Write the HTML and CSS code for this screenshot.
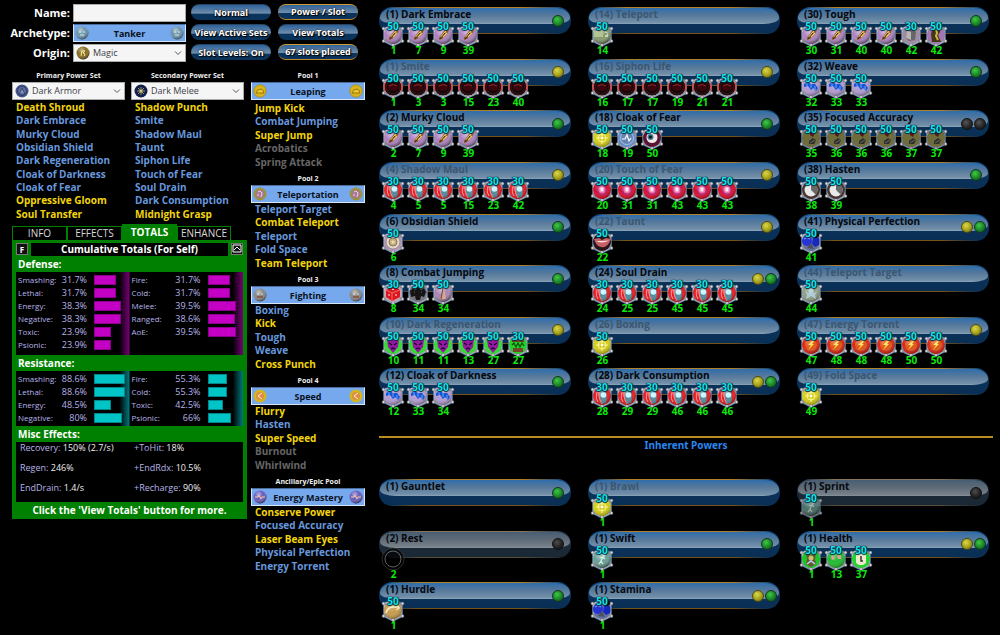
FILE: index.html
```html
<!DOCTYPE html>
<html lang="en">
<head>
<meta charset="utf-8">
<title>Hero Designer</title>
<link rel="stylesheet" href="styles.css">
</head>
<body>
<svg class="defs" aria-hidden="true">
<defs>
<radialGradient id="shade" cx=".4" cy=".3" r=".7"><stop offset="0" stop-color="#fff" stop-opacity=".5"/><stop offset=".5" stop-color="#fff" stop-opacity="0"/><stop offset="1" stop-color="#000" stop-opacity=".5"/></radialGradient>
<linearGradient id="silver" x2="1" y2="1"><stop offset="0" stop-color="#d4d4da"/><stop offset=".5" stop-color="#95979e"/><stop offset="1" stop-color="#b3b5bc"/></linearGradient>
<symbol id="frame" viewBox="0 0 24 24"><path d="M12 1 21 5.500V18.500L12 23 3 18.500V5.500Z" fill="#1f4f7e" stroke="#2f6ca5" stroke-width="1.500"/><path d="M12 1.500 20.500 6V18L12 22.500 3.500 18V6Z" fill="#847f89" stroke="url(#silver)" stroke-width="1.500"/><g fill="#d4d4da" stroke="#55575c" stroke-width=".5"><circle cx="2.500" cy="5.500" r="1.500"/><circle cx="21.500" cy="5.500" r="1.500"/><circle cx="2.500" cy="18" r="1.500"/><circle cx="21.500" cy="18" r="1.500"/><circle cx="12" cy="22" r="1.500"/></g></symbol>
<symbol id="resist" viewBox="0 0 24 24"><circle cx="12" cy="12" r="9" fill="#ad7fc0"/><circle cx="12" cy="12" r="9" fill="url(#shade)"/><path d="M8 15 13 8 18 7 16 11 11 16 8 17Z" fill="#8b5c22"/><path d="M10 14 15 8M12 14 16 10" stroke="#f0cc68" stroke-width="1.200"/><path d="M9 16 14 10" stroke="#3b2417"/></symbol>
<symbol id="smite" viewBox="0 0 24 24"><circle cx="12" cy="12" r="9" fill="#120708" stroke="#a89a9e" stroke-width="1"/><path d="M4 8A9 9 0 0 0 4 16M20 8A9 9 0 0 1 20 16" stroke="#e04444" stroke-width="1.500" fill="none"/><circle cx="12" cy="12" r="7" fill="none" stroke="#2b1116" stroke-width="2"/><ellipse cx="12" cy="12" rx="5.500" ry="4" fill="#3a060b"/><path d="M8 11Q12 8 16 11" stroke="#8a2a32" fill="none"/></symbol>
<symbol id="maul" viewBox="0 0 24 24"><circle cx="12" cy="12" r="9" fill="#e81a20"/><path d="M11 4Q8 12 12 20L16 19Q18 12 15 5Z" fill="#4f8c9e"/><path d="M10 4Q7 12 12 20M9 5Q4 12 8 18" stroke="#f5b4b6" stroke-width=".8" fill="none"/><circle cx="13.500" cy="11" r="2.800" fill="#c6f5ff"/><circle cx="12" cy="12" r="9" fill="url(#shade)" opacity=".6"/></symbol>
<symbol id="shield" viewBox="0 0 24 24"><circle cx="12" cy="12" r="9" fill="#b695bf"/><circle cx="12" cy="12" r="7" fill="#e2d7c9" stroke="#8c8276" stroke-width=".8"/><circle cx="12" cy="12" r="4" fill="#c5af87" stroke="#77664a" stroke-width=".8"/><circle cx="12" cy="12" r="1.500" fill="#f7dda0"/></symbol>
<symbol id="dice" viewBox="0 0 24 24"><circle cx="12" cy="12" r="9" fill="#c7a5b3"/><path d="M5 9 14 5 19 9V16L11 20 5 16Z" fill="#db181f"/><path d="M5 9 11 12 19 9M11 12V20" stroke="#ff8c86" stroke-width=".7" fill="none"/><g fill="#fff"><circle cx="8" cy="14" r=".8"/><circle cx="15" cy="14" r=".8"/><circle cx="12" cy="8.500" r=".8"/></g></symbol>
<symbol id="knights" viewBox="0 0 24 24"><circle cx="12" cy="12" r="9" fill="#777680"/><path d="M4 10 7 7 9 9 12 5 15 9 18 7 20 11 18 16 15 15 14 19 10 19 9 15 5 16Z" fill="#151515"/><path d="M8 11H9M15 11H16" stroke="#666"/></symbol>
<symbol id="nose" viewBox="0 0 24 24"><circle cx="12" cy="12" r="9" fill="#a883b1"/><circle cx="12" cy="12" r="9" fill="url(#shade)"/><path d="M12 6 14 12 15 18 9 18 11 12Z" fill="#d5a88d"/><path d="M12 7 10 18" stroke="#684542"/></symbol>
<symbol id="mask" viewBox="0 0 24 24"><circle cx="12" cy="12" r="9" fill="#35da32"/><path d="M6 6 9 7 12 6 15 7 18 6 17 14 12 20 7 14Z" fill="#9518a3"/><path d="M8 10 11 12M16 10 13 12M10 16 12 15 14 16" stroke="#1b0324" stroke-width="1.300" fill="none"/></symbol>
<symbol id="totem" viewBox="0 0 24 24"><circle cx="12" cy="12" r="9" fill="#25d028"/><path d="M6 6H18V9H6ZM7 15H17V19H7Z" fill="#774329"/><path d="M6 12 8 10 10 14 12 10 14 14 16 10 18 13" stroke="#084f09" stroke-width="1.200" fill="none"/></symbol>
<symbol id="weave" viewBox="0 0 24 24"><circle cx="12" cy="12" r="9" fill="#b29bd2"/><circle cx="12" cy="12" r="9" fill="url(#shade)" opacity=".7"/><path d="M5 9 9 7 12 9 16 9 19 13 17 16 14 13 12 15 9 11 5 12Z" fill="#1555d8"/><path d="M8 8V11M12 9V13M16 11V15" stroke="#86bcf8" stroke-width=".8"/></symbol>
<symbol id="olive" viewBox="0 0 24 24"><circle cx="12" cy="12" r="9" fill="#83996a"/><circle cx="12" cy="12" r="9" fill="url(#shade)"/><path d="M4 8H13V14H4Z" fill="#b4c394"/><path d="M15 8V14H18Q19 9 15 8Z" fill="#cbd6b3"/><path d="M16 10V12" stroke="#40523a"/></symbol>
<symbol id="target" viewBox="0 0 24 24"><circle cx="12" cy="12" r="9" fill="#d6ce18"/><circle cx="12" cy="12" r="9" fill="url(#shade)" opacity=".6"/><circle cx="12" cy="12" r="4" fill="none" stroke="#fff9a2" stroke-width=".8"/><path d="M12 6V10M12 14V18M6 12H10M14 12H18" stroke="#fffbc7" stroke-width=".8"/><circle cx="12" cy="12" r="1.300" fill="#fff"/></symbol>
<symbol id="pulse" viewBox="0 0 24 24"><circle cx="12" cy="12" r="9" fill="#658fca"/><circle cx="12" cy="12" r="6.500" fill="#6684b3" stroke="#b8cfee" stroke-width=".8"/><path d="M7 13H10L12 9 14 15 16 12" stroke="#fff" stroke-width="1.200" fill="none"/></symbol>
<symbol id="eye" viewBox="0 0 24 24"><circle cx="12" cy="12" r="9" fill="#5a1535"/><circle cx="12" cy="11.500" r="5.500" fill="#f1e9e4"/><circle cx="10.500" cy="11" r="3" fill="#3e7894"/><circle cx="10.500" cy="11" r="1.500" fill="#080f14"/></symbol>
<symbol id="fear" viewBox="0 0 24 24"><circle cx="12" cy="12" r="9" fill="#e10b29"/><circle cx="12" cy="12" r="5.500" fill="#b81d68"/><circle cx="12" cy="12" r="3.500" fill="#ea6da4"/><rect x="10.500" y="9.500" width="3" height="4" fill="#ffe5f1"/><circle cx="12" cy="12" r="9" fill="url(#shade)" opacity=".6"/></symbol>
<symbol id="lips" viewBox="0 0 24 24"><circle cx="12" cy="12" r="9" fill="#291519"/><path d="M4 9 9 8 12 10 16 8 21 9Q17 19 11 17 6 16 4 9Z" fill="#c76065"/><path d="M6 11Q12 11 19 10.500Q12 14 6 11" fill="#f6e9de"/></symbol>
<symbol id="block" viewBox="0 0 24 24"><circle cx="12" cy="12" r="9" fill="#9f8ba6"/><path d="M8 7 13 6 17 9 16 17 10 18 7 15Z" fill="#666"/><path d="M8 7 12 9V17L7 15Z" fill="#b9b5b3"/></symbol>
<symbol id="idol" viewBox="0 0 24 24"><circle cx="12" cy="12" r="9" fill="#a277b1"/><path d="M9 4H15L16 9 14 12 17 19H8L7 11Z" fill="#453615"/><path d="M12 6 13 10 12 13 14 17" stroke="#cdb548" stroke-width="2" fill="none"/></symbol>
<symbol id="focus" viewBox="0 0 24 24"><circle cx="12" cy="12" r="9" fill="#8e8b4c"/><path d="M11 5 16 6 14 11 11 9Z" fill="#701d25"/><path d="M10 15 14 12 17 14 15 18 10 18Z" fill="#3b3c3d"/><path d="M11 17 16 14" stroke="#88877b"/><path d="M12 1 21 5.500V18.500L12 23 3 18.500V5.500Z" fill="#000" opacity=".22"/></symbol>
<symbol id="clock" viewBox="0 0 24 24"><circle cx="12" cy="12" r="9" fill="#473531"/><circle cx="12" cy="12" r="6.500" fill="#e9e9e9"/><path d="M12 12V5.500A6.500 6.500 0 0 1 16.600 16.600Z" fill="#6a6967"/></symbol>
<symbol id="stamina" viewBox="0 0 24 24"><circle cx="12" cy="12" r="9" fill="#6370a0"/><circle cx="8" cy="11" r="5" fill="#2634d6"/><path d="M14 8H20V15L16 17 13 14Z" fill="#1629bf"/><circle cx="17" cy="5" r="3" fill="#06070d"/><path d="M8 18 12 13 15 19Z" fill="#4d5059"/><path d="M5 9Q8 6 11 9" stroke="#8ca0ff" fill="none"/></symbol>
<symbol id="crystal" viewBox="0 0 24 24"><circle cx="12" cy="12" r="9" fill="#8f9f83"/><circle cx="12" cy="12" r="9" fill="url(#shade)" opacity=".6"/><circle cx="12" cy="10" r="2.500" fill="#bcd6de"/><path d="M6 10 9 12 12 11 15 12 18 10 16 14 17 18 12 15 7 18 8 14Z" fill="#b4d2e0" opacity=".9"/></symbol>
<symbol id="bolt" viewBox="0 0 24 24"><circle cx="12" cy="12" r="9" fill="#dc2415"/><circle cx="12" cy="12" r="6" fill="#df5616"/><path d="M14 7 9 12H12L9 17 15 11H13L16 7Z" fill="#ffdc52"/><circle cx="12" cy="12" r="9" fill="url(#shade)" opacity=".6"/></symbol>
<symbol id="runner" viewBox="0 0 24 24"><circle cx="12" cy="12" r="9" fill="#679e93"/><circle cx="12" cy="12" r="9" fill="url(#shade)"/><circle cx="14" cy="8" r="1.500" fill="#d6f1e9"/><path d="M10 11 13 10 15 12M13 10 11 14 13 17M11 14 9 17" stroke="#d6f1e9" stroke-width="1.200" fill="none"/></symbol>
<symbol id="totemgreen" viewBox="0 0 24 24"><circle cx="12" cy="12" r="9" fill="#19c725"/><path d="M7 6 12 8 17 6 16 12 17 17 12 20 7 17 8 12Z" fill="#695834"/><circle cx="12" cy="11" r="2.500" fill="#d2bd76"/><path d="M8 17 12 14 16 17" stroke="#b8d4ef" stroke-width="1.500" fill="none"/></symbol>
<symbol id="heal" viewBox="0 0 24 24"><circle cx="12" cy="12" r="9" fill="#23ba31"/><circle cx="12" cy="12" r="9" fill="url(#shade)" opacity=".6"/><path d="M7 9 10 8 11 12 8 13ZM13 8H17V12H14Z" fill="#d7a597"/></symbol>
<symbol id="card" viewBox="0 0 24 24"><circle cx="12" cy="12" r="9" fill="#22d42d"/><path d="M9 5H15L17 8V16L14 18H10L7 16V8Z" fill="#eee9cb"/><path d="M12 9V14H14" stroke="#333" stroke-width="1.500" fill="none"/></symbol>
<symbol id="spring" viewBox="0 0 24 24"><circle cx="12" cy="12" r="9" fill="#c69b4d"/><circle cx="12" cy="12" r="9" fill="url(#shade)" opacity=".6"/><path d="M5 15Q7 8 14 9L18 9M15 7 18 10 15 12" stroke="#f9ecc9" stroke-width="1.500" fill="none"/></symbol>
<symbol id="rest" viewBox="0 0 24 24"><circle cx="12" cy="12" r="11" fill="#000" stroke="#4c4c4c" stroke-width=".8"/><circle cx="12" cy="12" r="8" fill="#000" stroke="#888"/></symbol>
<symbol id="m-face" viewBox="0 0 14 14"><circle cx="7" cy="7" r="6.500" fill="#6b93ab"/><circle cx="7" cy="7" r="6.500" fill="url(#shade)"/><path d="M4 6H6M8 6H10M5 9H9" stroke="#d7eaf3"/></symbol>
<symbol id="m-magic" viewBox="0 0 14 14"><circle cx="7" cy="7" r="6.500" fill="#846b20"/><circle cx="7" cy="7" r="6.500" fill="url(#shade)"/><path d="M5 10 6 5 9 5 7 7 9 8 8 10" stroke="#fae889" fill="none"/></symbol>
<symbol id="m-armor" viewBox="0 0 14 14"><circle cx="7" cy="7" r="6.500" fill="#465589"/><circle cx="7" cy="7" r="4.500" fill="#626ea0" stroke="#293b70"/><path d="M4 10 7 4 10 10Z" fill="#8c94ba" stroke="#31426e"/></symbol>
<symbol id="m-melee" viewBox="0 0 14 14"><circle cx="7" cy="7" r="6.500" fill="#111f4a"/><path d="M7 3V11M3 7H11M4 4 10 10M10 4 4 10" stroke="#bcb27a" stroke-width=".8"/><circle cx="7" cy="7" r="1.500" fill="#d9c878"/></symbol>
<symbol id="m-leap" viewBox="0 0 14 14"><circle cx="7" cy="7" r="6.200" fill="#d8b41a" stroke="#9d7e16" stroke-width=".6"/><path d="M3 9Q4 5 8 5Q11 6 11 9Z" fill="#ecca2d" stroke="#816411" stroke-width=".8"/></symbol>
<symbol id="m-tele" viewBox="0 0 14 14"><circle cx="7" cy="7" r="6.500" fill="#9c9143"/><circle cx="7" cy="7" r="4" fill="#a87894"/><path d="M5 5 7 4 9 6 8 10M5 7V9" stroke="#eed2e7" fill="none"/></symbol>
<symbol id="m-fight" viewBox="0 0 14 14"><circle cx="7" cy="7" r="6.500" fill="#858585"/><circle cx="7" cy="7" r="6.500" fill="url(#shade)"/><path d="M4 6H6M8 6H10" stroke="#ddd"/><path d="M4 9H10" stroke="#884c43" stroke-width="1.500"/></symbol>
<symbol id="m-speed" viewBox="0 0 14 14"><circle cx="7" cy="7" r="6.500" fill="#d5b51b"/><circle cx="7" cy="7" r="4" fill="#dc8e43"/><path d="M9 4 5 7 9 10" stroke="#fff2d5" fill="none"/></symbol>
<symbol id="m-energy" viewBox="0 0 14 14"><circle cx="7" cy="7" r="6.500" fill="#6659be"/><circle cx="7" cy="7" r="6.500" fill="url(#shade)"/><path d="M2 7H5L6 5 8 9 9 7H12" stroke="#f7c8a3" fill="none"/></symbol>
<symbol id="chevron" viewBox="0 0 14 14"><path d="M4 5.500 7 8.500 10 5.500" stroke="#555" fill="none"/></symbol>
</defs>
</svg>
<div class="app">
<aside class="sidebar">
  <header class="top">
    <form class="hero">
      <label for="name">Name:</label><input id="name" class="field" type="text">
      <span class="caption">Archetype:</span><button type="button" class="setbar"><svg><use href="#m-face"/></svg><span>Tanker</span><svg><use href="#m-face"/></svg></button>
      <label for="origin">Origin:</label><div class="pick"><svg class="medal"><use href="#m-magic"/></svg><select id="origin"><option>Magic</option></select><svg class="chev"><use href="#chevron"/></svg></div>
    </form>
    <div class="modes">
      <button>Normal</button><button class="gold">Power / Slot</button>
      <button>View Active Sets</button><button>View Totals</button>
      <button>Slot Levels: On</button><button class="gold">67 slots placed</button>
    </div>
  </header>
  <div class="columns">
    <div class="left">
      <div class="sets">
        <section><label class="cap" for="primary">Primary Power Set</label><div class="pick"><svg class="medal"><use href="#m-armor"/></svg><select id="primary"><option>Dark Armor</option></select><svg class="chev"><use href="#chevron"/></svg></div><ul class="list nine" data-list="primary"></ul></section>
        <section><label class="cap" for="secondary">Secondary Power Set</label><div class="pick"><svg class="medal"><use href="#m-melee"/></svg><select id="secondary"><option>Dark Melee</option></select><svg class="chev"><use href="#chevron"/></svg></div><ul class="list nine" data-list="secondary"></ul></section>
      </div>
      <nav class="tabs"><button>INFO</button><button>EFFECTS</button><button class="on">TOTALS</button><button>ENHANCE</button></nav>
      <section class="panel">
        <div class="titlebar"><button class="mini">F</button><h2>Cumulative Totals (For Self)</h2><button class="mini" aria-label="Collapse"><svg viewBox="0 0 10 10"><path d="M1 1H9V8H1ZM2 6 5 3 8 6" fill="none" stroke="#fff"/></svg></button></div>
        <h3>Defense:</h3>
        <div class="stats defense"><table data-stats="defenseA"></table><table data-stats="defenseB"></table></div>
        <h3>Resistance:</h3>
        <div class="stats resistance"><table data-stats="resistA"></table><table data-stats="resistB"></table></div>
        <h3>Misc Effects:</h3>
        <div class="misc">
          <p>Recovery: <b>150% (2.7/s)</b></p><p>+ToHit: <b>18%</b></p>
          <p>Regen: <b>246%</b></p><p>+EndRdx: <b>10.5%</b></p>
          <p>EndDrain: <b>1.4/s</b></p><p>+Recharge: <b>90%</b></p>
        </div>
        <p class="hint">Click the 'View Totals' button for more.</p>
      </section>
    </div>
    <div class="pools" id="pools"></div>
  </div>
</aside>
<main class="build">
  <div class="powers" id="powers"></div>
  <h2 class="inherent-title">Inherent Powers</h2>
  <div class="powers inherent" id="inherent"></div>
</main>
</div>
<script src="app.js"></script>
</body>
</html>
```
FILE: styles.css
```css
* { box-sizing: border-box; }
body { margin: 0; background: #000; color: #fff; font-family: "Open Sans", "Noto Sans", sans-serif; font-size: 10px; }
button, input, select { font: inherit; color: inherit; margin: 0; padding: 0; border: 0; background: none; }
h2, h3, p, ul { margin: 0; padding: 0; }
ul { list-style: none; }
.defs { position: absolute; width: 0; height: 0; }
.app { display: flex; }
.sidebar { flex: none; width: 365px; padding-left: 12px; }
.top { display: flex; gap: 5px; padding-top: 4px; }
.hero { display: grid; grid-template-columns: 58px 113px; column-gap: 3px; row-gap: 2px; align-items: center; }
.hero label, .caption { font-size: 11px; font-weight: 700; line-height: 18px; text-align: right; white-space: nowrap; justify-self: end; }
.field { width: 100%; height: 18px; padding: 0 4px; background: #f5f5f5; color: #111; border: 1px solid #aaa; }
.setbar { display: flex; width: 100%; height: 18px; align-items: center; justify-content: space-between; padding: 0 1px; background: #75a8ec; border: 1px solid #d7e5f7; border-top-color: #4a6d9d; color: #0a101c; font-size: 9px; font-weight: 700; }
.setbar svg, .medal { width: 14px; height: 14px; flex: none; }
.pick { display: flex; align-items: center; height: 18px; padding-left: 2px; background: #f5f5f5; border: 1px solid #aaa; color: #3c4048; font-size: 9px; }
.pick select { flex: 1; min-width: 0; appearance: none; padding-left: 3px; line-height: 14px; }
.chev { width: 14px; height: 14px; flex: none; }
.modes { display: grid; grid-template-columns: 80px 80px; column-gap: 7px; row-gap: 4px; align-content: start; }
.modes button { height: 16px; border-radius: 8px; font-size: 9px; font-weight: 700; line-height: 14px; white-space: nowrap; text-shadow: 0 0 2px #000, 1px 1px 1px #000; background: linear-gradient(#2c629a, #718eab 55%, #0b345c 60%, #0b345c); border-top: 1px solid #2b4561; }
.modes .gold { border-top: 1px solid #d39a35; border-bottom: 1px solid #c1882b; }
.columns { display: flex; gap: 4px; }
.left { width: 235px; flex: none; }
.sets { display: grid; grid-template-columns: 113px 113px; gap: 6px; padding-top: 8px; }
.cap { display: block; font-size: 7px; font-weight: 700; line-height: 12px; text-align: center; color: #eee; }
.list { display: grid; grid-auto-rows: 1fr; min-height: 67px; padding-left: 4px; }
.nine { min-height: 121px; padding-top: 1px; }
.list button { display: block; font-weight: 700; line-height: 13px; color: #6797dd; white-space: nowrap; }
.list .avail { color: #f2d50c; }
.list .locked { color: #666; }
.tabs { display: grid; grid-template-columns: 55px 55px 55px 54px; align-items: end; margin-top: 3px; }
.tabs button { height: 14px; border: 1px solid #008000; border-bottom: 0; line-height: 13px; color: #d8d8d8; }
.tabs .on { height: 16px; background: #008000; color: #fff; font-weight: 700; }
.panel { background: #008000; padding: 2px 4px 0; }
.titlebar { display: grid; grid-template-columns: 12px 1fr 12px; gap: 3px; height: 14px; align-items: center; }
.titlebar h2 { background: #000; font-size: 10px; line-height: 13px; text-align: center; }
.mini { width: 12px; height: 12px; background: #111; border: 1px solid #777; font-size: 8px; font-weight: 700; line-height: 9px; }
.mini svg { display: block; width: 10px; height: 10px; }
.panel h3 { font-size: 10px; line-height: 16px; padding-left: 2px; }
.stats { display: grid; grid-template-columns: 1fr 1fr; background: #000; }
.stats table { border-collapse: collapse; table-layout: fixed; width: 100%; align-self: start; margin-top: 1px; }
.stats tr { height: 13px; }
.stats th, .stats td { padding: 0; line-height: 13px; font-size: 9px; font-weight: 400; color: #b7b4e8; white-space: nowrap; }
.stats th { width: 43px; padding-left: 2px; text-align: left; font-size: 8px; }
.stats .value { width: 28px; text-align: right; }
.stats .track { padding-left: 7px; }
.meter { display: block; height: 10px; }
.defense { padding-bottom: 4px; background: linear-gradient(90deg, transparent 91%, #7a007a) 0 0 / 50% 100%, #000; }
.defense .meter { background: #c400c4; border: 1px solid #8a008a; }
.resistance { padding-bottom: 2px; background: linear-gradient(90deg, transparent 91%, #007a80) 0 0 / 50% 100%, #000; }
.resistance .meter { background: #00c4c6; border: 1px solid #00878a; }
.misc { display: grid; grid-template-columns: 114px 1fr; grid-auto-rows: 20px; padding-left: 4px; background: #000; font-size: 9px; line-height: 11px; color: #b7b4e8; }
.misc b { font-weight: 400; color: #eee; }
.hint { font-size: 10px; font-weight: 700; line-height: 17px; text-align: center; }
.pools { flex: none; width: 114px; display: flex; flex-direction: column; gap: 4px; padding-top: 8px; }
.pools section:first-child .list { padding-top: 2px; min-height: 69px; }
.build { flex: 1; min-width: 0; padding: 7px 7px 0 14px; }
.powers { display: grid; grid-template-columns: repeat(3, minmax(0, 1fr)); grid-template-rows: repeat(8, 1fr); grid-auto-flow: column; column-gap: 17px; min-height: 413px; padding-right: 4px; }
.inherent { grid-template-rows: none; grid-auto-rows: 1fr; grid-auto-flow: row; min-height: 155px; }
.inherent-title { margin-top: 16px; margin-bottom: 27px; border-top: 2px solid #b98d24; font-family: "Noto Sans", sans-serif; font-size: 10px; line-height: 14px; text-align: center; color: #2a86f0; }
.power { position: relative; }
.bar { position: absolute; inset: 0 0 auto; height: 27px; display: flex; align-items: center; justify-content: flex-end; gap: 1px; padding-right: 7px; border-radius: 13px; background: linear-gradient(90deg, transparent 5%, #b0802a 20%, #b0802a 75%, transparent 95%) 0 0 / 100% 1px no-repeat, linear-gradient(90deg, transparent 5%, #76521a 20%, #76521a 75%, transparent 95%) 0 100% / 100% 1px no-repeat, linear-gradient(#15477a, #0a3158 60%, #0a2f55); }
.bar.pair { padding-right: 3px; }
.bar::before { content: ""; position: absolute; inset: 1px 1px auto; height: 16px; border-radius: 14px 14px 16px 16px / 10px 10px 6px 6px; background: linear-gradient(#2f6dab, #56799b 45%, #7490aa 90%, #8da6bb); }
.off .bar { filter: saturate(.4) brightness(.9); }
.dot { position: relative; width: 12px; height: 12px; border-radius: 6px; border: 1px solid #12351c; background: radial-gradient(circle at 40% 35%, #3fc943, #1b8a2a 50%, #0b4a18); }
.dot.y { border-color: #4d4a14; background: radial-gradient(circle at 40% 35%, #dbd84c, #a9a51c 50%, #66620f); }
.dot.k { border-color: #111; background: radial-gradient(circle at 40% 35%, #555, #2a2a2a 50%, #111); }
.title { position: relative; display: block; padding-left: 7px; font-weight: 700; line-height: 15px; color: #05080d; white-space: nowrap; }
.dim .title { color: #3d566f; }
.slots { position: relative; display: flex; padding-left: 2px; }
.slot { position: relative; width: 25px; padding-top: 1px; text-align: center; font-weight: 700; }
.slot svg { display: block; width: 24px; height: 24px; }
.boost { position: absolute; inset: -2px 1px auto 0; line-height: 12px; color: #18e4ee; text-shadow: 0 0 1px #000, 1px 0 1px #034, -1px 0 1px #034, 0 1px 1px #034; }
.level { display: block; margin-top: -2px; line-height: 10px; color: #0cea0c; }
.off .slot svg { opacity: .7; }
```
FILE: app.js
```js
const lists = {
  primary: ["*Death Shroud", "Dark Embrace", "Murky Cloud", "Obsidian Shield", "Dark Regeneration", "Cloak of Darkness", "Cloak of Fear", "*Oppressive Gloom", "*Soul Transfer"],
  secondary: ["*Shadow Punch", "Smite", "Shadow Maul", "Taunt", "Siphon Life", "Touch of Fear", "Soul Drain", "Dark Consumption", "*Midnight Grasp"]
};
const pools = [
  ["Pool 1", "Leaping", "m-leap", ["*Jump Kick", "Combat Jumping", "*Super Jump", "-Acrobatics", "-Spring Attack"]],
  ["Pool 2", "Teleportation", "m-tele", ["Teleport Target", "*Combat Teleport", "Teleport", "Fold Space", "*Team Teleport"]],
  ["Pool 3", "Fighting", "m-fight", ["Boxing", "*Kick", "Tough", "Weave", "*Cross Punch"]],
  ["Pool 4", "Speed", "m-speed", ["*Flurry", "Hasten", "*Super Speed", "-Burnout", "-Whirlwind"]],
  ["Ancillary/Epic Pool", "Energy Mastery", "m-energy", ["*Conserve Power", "Focused Accuracy", "*Laser Beam Eyes", "Physical Perfection", "Energy Torrent"]]
];
const stats = {
  defenseA: [["Smashing:", 31.7], ["Lethal:", 31.7], ["Energy:", 38.3], ["Negative:", 38.3], ["Toxic:", 23.9], ["Psionic:", 23.9]],
  defenseB: [["Fire:", 31.7], ["Cold:", 31.7], ["Melee:", 39.5], ["Ranged:", 38.6], ["AoE:", 39.5]],
  resistA: [["Smashing:", 88.6], ["Lethal:", 88.6], ["Energy:", 48.5], ["Negative:", 80]],
  resistB: [["Fire:", 55.3], ["Cold:", 55.3], ["Toxic:", 42.5], ["Psionic:", 66]]
};
// title, indicator dots, row state, slots as "icon boost level"
const rep = (icon, boost, levels) => levels.map(l => [icon, boost, l]);
const powers = [
  ["(1) Dark Embrace", "g", "", rep("resist", 50, [1, 7, 9, 39])],
  ["(1) Smite", "y", "dim", rep("smite", 50, [1, 3, 3, 15, 23, 40])],
  ["(2) Murky Cloud", "g", "", rep("resist", 50, [2, 7, 9, 39])],
  ["(4) Shadow Maul", "y", "dim", rep("maul", 30, [4, 5, 5, 15, 23, 42])],
  ["(6) Obsidian Shield", "g", "", rep("shield", 50, [6])],
  ["(8) Combat Jumping", "g", "", [["dice", 30, 8], ["knights", 50, 34], ["nose", 50, 34]]],
  ["(10) Dark Regeneration", "y", "dim", [...rep("mask", 50, [10, 11, 11, 13, 27]), ["totem", 30, 27]]],
  ["(12) Cloak of Darkness", "g", "", rep("weave", 50, [12, 33, 34])],
  ["(14) Teleport", "", "dim", rep("olive", 50, [14])],
  ["(16) Siphon Life", "y", "dim", rep("smite", 50, [16, 17, 17, 19, 21, 21])],
  ["(18) Cloak of Fear", "g", "", [["target", 50, 18], ["pulse", 50, 19], ["eye", 50, 50]]],
  ["(20) Touch of Fear", "y", "dim", rep("fear", 50, [20, 31, 31, 43, 43, 43])],
  ["(22) Taunt", "y", "dim", rep("lips", 50, [22])],
  ["(24) Soul Drain", "yg", "", rep("maul", 30, [24, 25, 25, 45, 45, 45])],
  ["(26) Boxing", "", "dim", rep("target", 50, [26])],
  ["(28) Dark Consumption", "yg", "", rep("maul", 30, [28, 29, 29, 46, 46, 46])],
  ["(30) Tough", "g", "", [...rep("resist", 50, [30, 31, 40, 40]), ["block", 30, 42], ["idol", 50, 42]]],
  ["(32) Weave", "g", "", rep("weave", 50, [32, 33, 33])],
  ["(35) Focused Accuracy", "kk", "", rep("focus", 50, [35, 36, 36, 36, 37, 37])],
  ["(38) Hasten", "g", "", rep("clock", 50, [38, 39])],
  ["(41) Physical Perfection", "yg", "", rep("stamina", 50, [41])],
  ["(44) Teleport Target", "", "dim", rep("crystal", 50, [44])],
  ["(47) Energy Torrent", "y", "dim", rep("bolt", 50, [47, 48, 48, 48, 50, 50])],
  ["(49) Fold Space", "", "dim", rep("target", 50, [49])]
];
const inherent = [
  ["(1) Gauntlet", "g", "", []],
  ["(1) Brawl", "", "dim", rep("target", 50, [1])],
  ["(1) Sprint", "k", "off", rep("runner", 50, [1])],
  ["(2) Rest", "k", "off", rep("rest", "", [2])],
  ["(1) Swift", "g", "", rep("runner", 50, [1])],
  ["(1) Health", "yg", "", [["totemgreen", 50, 1], ["heal", 50, 13], ["card", 50, 37]]],
  ["(1) Hurdle", "g", "", rep("spring", 50, [1])],
  ["(1) Stamina", "yg", "", rep("stamina", 50, [1])]
];
const item = n => {
  const cls = n[0] === "*" ? "avail" : n[0] === "-" ? "locked" : "taken";
  return `<li><button class="${cls}">${n.replace(/^[*-]/, "")}</button></li>`;
};
document.querySelectorAll("[data-list]").forEach(ul => { ul.innerHTML = lists[ul.dataset.list].map(item).join(""); });
document.getElementById("pools").innerHTML = pools.map(([cap, name, icon, items]) =>
  `<section><span class="cap">${cap}</span><button class="setbar"><svg><use href="#${icon}"/></svg><span>${name}</span><svg><use href="#${icon}"/></svg></button><ul class="list">${items.map(item).join("")}</ul></section>`).join("");
document.querySelectorAll("[data-stats]").forEach(t => {
  const scale = t.dataset.stats.startsWith("def") ? 0.7 : 0.35;
  t.innerHTML = stats[t.dataset.stats].map(([k, v]) =>
    `<tr><th>${k}</th><td class="value">${v}%</td><td class="track"><span class="meter" style="width:${Math.round(v * scale)}px"></span></td></tr>`).join("");
});
const slot = ([icon, boost, level]) =>
  `<div class="slot"><svg viewBox="0 0 24 24">${icon === "rest" ? "" : '<use href="#frame"/>'}<use href="#${icon}"/></svg><span class="boost">${boost}</span><span class="level">${level}</span></div>`;
const power = ([title, dots, state, slots]) =>
  `<article class="power ${state}"><div class="bar ${dots.length > 1 ? "pair" : ""}">${[...dots].map(d => `<i class="dot ${d}"></i>`).join("")}</div><span class="title">${title}</span><div class="slots">${slots.map(slot).join("")}</div></article>`;
document.getElementById("powers").innerHTML = powers.map(power).join("");
document.getElementById("inherent").innerHTML = inherent.map(power).join("");
```
